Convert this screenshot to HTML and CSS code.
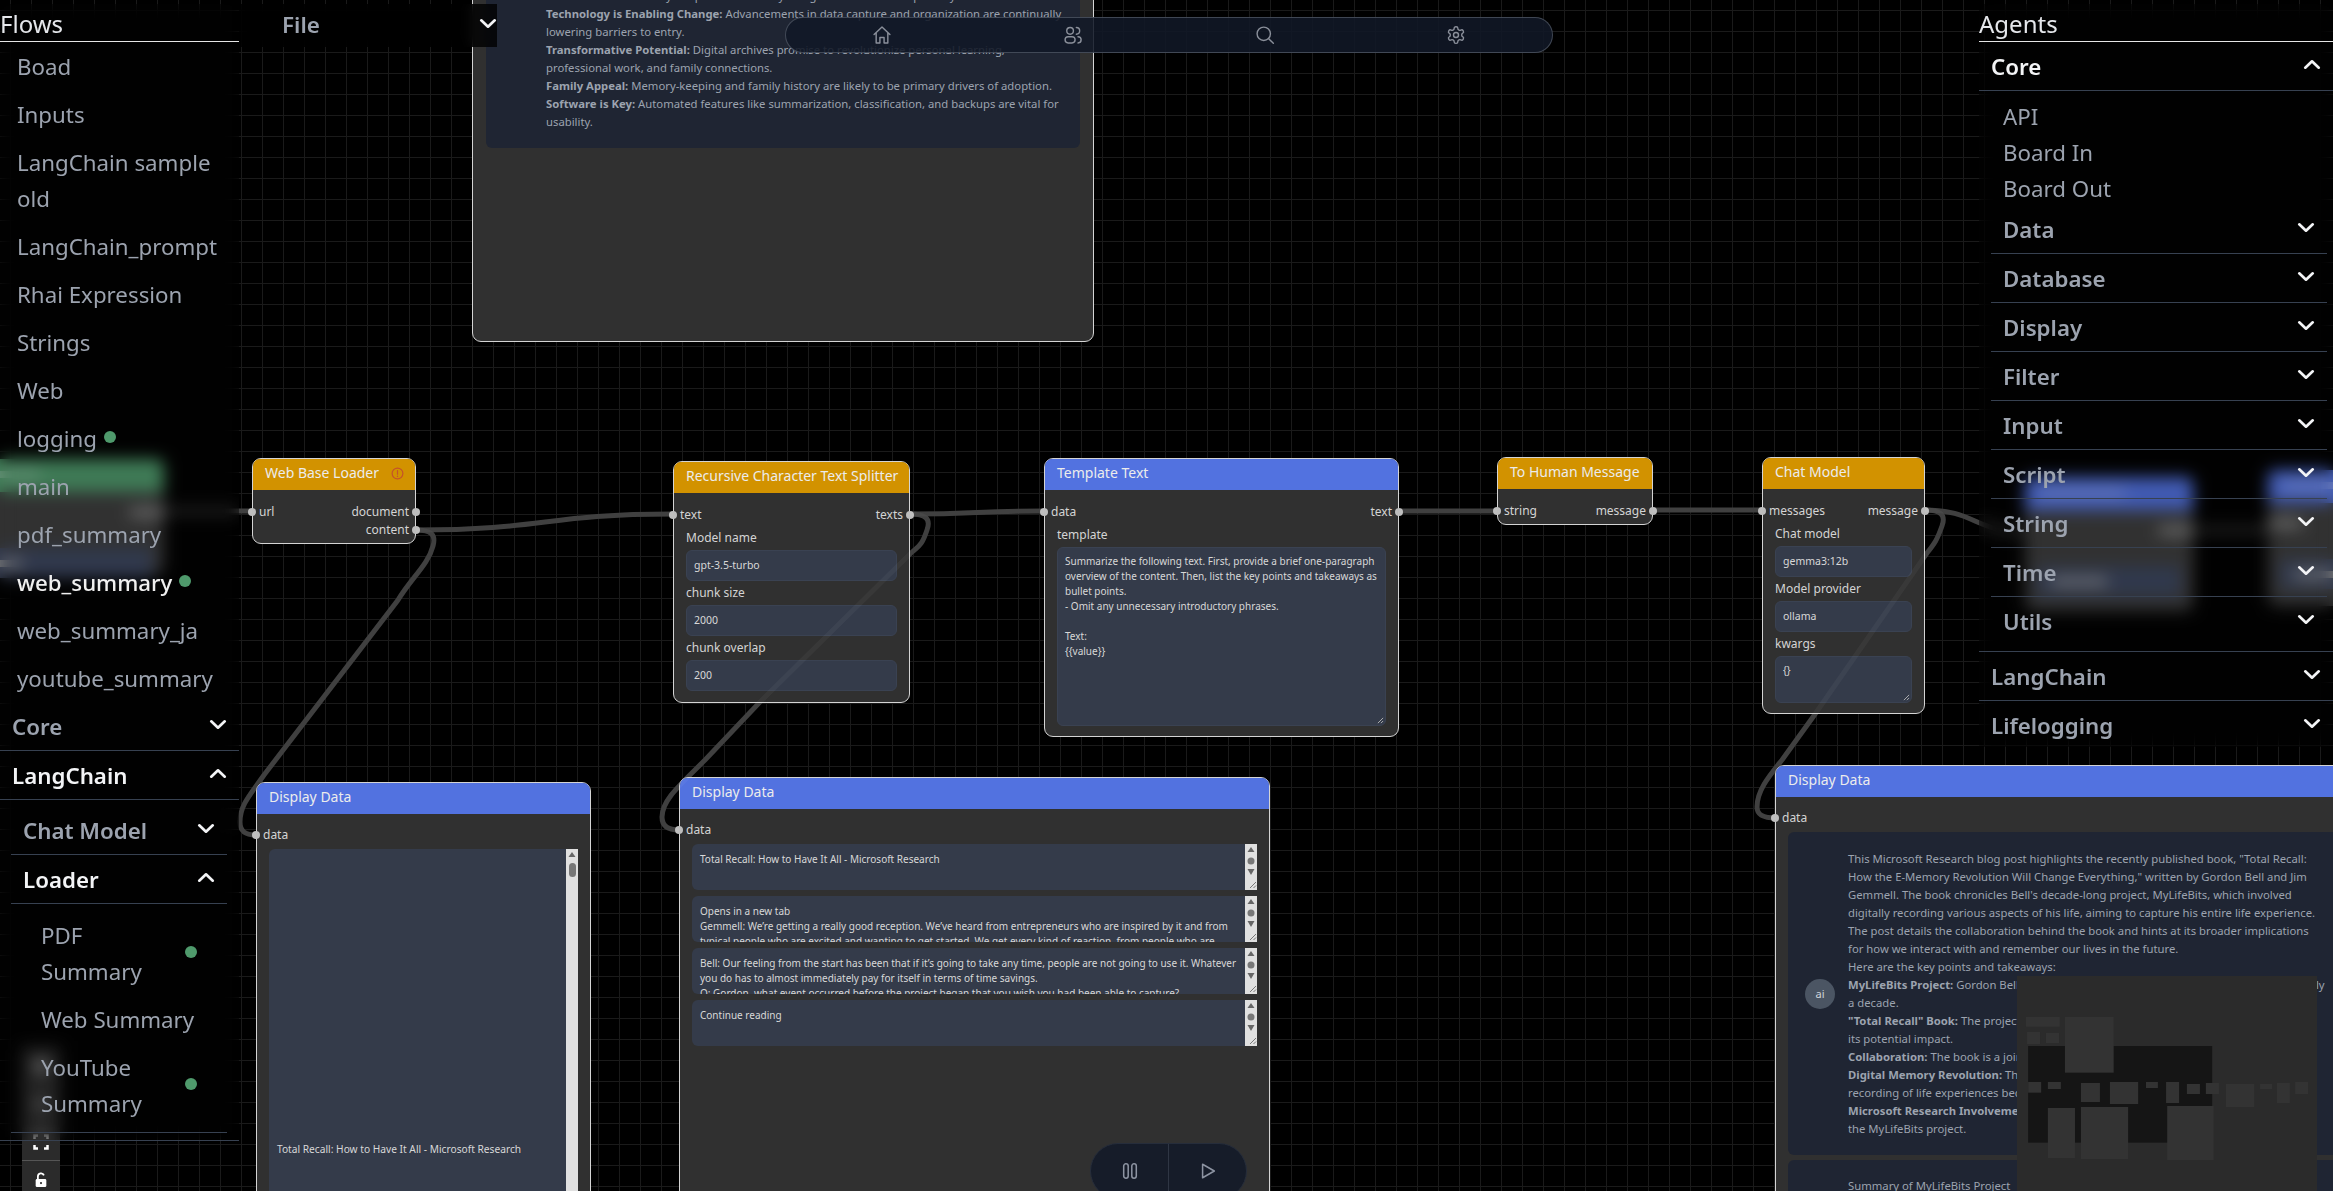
FILE: index.html
```html
<!DOCTYPE html>
<html lang="en">
<head>
  <meta charset="UTF-8" />
  <title>Flows</title>
  <link rel="stylesheet" href="styles.css">
</head>
<body>
  <svg class="defs" width="0" height="0">
    <symbol id="chev" viewBox="0 0 20 12">
      <path d="M2.500 2.500 10 9.500 17.500 2.500" fill="none" stroke="currentColor" stroke-width="3" stroke-linecap="round" stroke-linejoin="round"/>
    </symbol>
    <symbol id="sbar" viewBox="0 0 12 46">
      <path d="M6 3 9.500 8h-7z" fill="#666"/>
      <circle cx="6" cy="17" r="3.500" fill="#777"/>
      <path d="M6 31 9.500 25h-7z" fill="#666"/>
      <path d="M5 44 11 38M8.500 44 11 41.500" stroke="#777" stroke-width="1"/>
    </symbol>
    <g id="edges">
      <path d="M160 511H252"/>
      <path d="M416 530C545 530 545 514 673 514"/>
      <path d="M416 530C432 530 436 535 433 546C428 565 412 577 398 600L264 775C250 795 240 805 240 822C240 832 246 835 256 835"/>
      <path d="M910 514C977 514 977 511 1044 511"/>
      <path d="M910 514C926 514 931 519 927 530C922 545 920 545 911 553L759 703L705 760C680 785 662 800 662 817C662 826 668 830 679 830"/>
      <path d="M1399 511H1497"/>
      <path d="M1653 510H1762"/>
      <path d="M1925 510C1975 510 1975 532 2025 532"/>
      <path d="M1925 510C1941 510 1946 515 1942 526C1937 540 1935 543 1927 553L1813 717L1782 760C1770 775 1757 790 1757 807C1757 815 1763 818 1776 818"/>
      <path d="M2193 530H2268"/>
    </g>
  </svg>

  <main class="canvas">
    <svg class="edge-layer" viewBox="0 0 2333 1191"><use href="#edges"/></svg>

    <!-- nodes that sit behind the side panels -->
    <div class="node ghost n-ghost-a">
      <div class="node-head head-green"><span class="ghost-bit title"></span></div>
      <span class="ghost-bit port-bit"></span>
      <div class="ghost-field"><span class="ghost-bit value"></span></div>
    </div>
    <div class="node ghost n-ghost-b">
      <div class="node-head head-blue"><span class="ghost-bit title"></span></div>
      <span class="ghost-bit port-bit"></span>
      <div class="ghost-field"><span class="ghost-bit value"></span></div>
    </div>
    <div class="node ghost n-ghost-c">
      <div class="node-head head-blue"><span class="ghost-bit title"></span></div>
      <span class="ghost-bit port-bit left"></span>
      <div class="ghost-field"><span class="ghost-bit value"></span></div>
    </div>

    <div class="node n-summary">
      <div class="msg-card top-card">
        Personal Archives: Early adopters are already using these tools to keep family memories and records.<br>
        <b>Technology is Enabling Change:</b> Advancements in data capture and organization are continually<br>
        lowering barriers to entry.<br>
        <b>Transformative Potential:</b> Digital archives promise to revolutionize personal learning,<br>
        professional work, and family connections.<br>
        <b>Family Appeal:</b> Memory-keeping and family history are likely to be primary drivers of adoption.<br>
        <b>Software is Key:</b> Automated features like summarization, classification, and backups are vital for<br>
        usability.
      </div>
    </div>

    <div class="node n-loader">
      <div class="node-head head-orange">Web Base Loader
        <svg class="warn" viewBox="0 0 14 14"><circle cx="7" cy="7" r="5.800"/><path d="M7 3.800V7.800M7 9.800V10.200"/></svg>
      </div>
      <div class="port-row first"><span class="port in">url</span><span class="port out">document</span></div>
      <div class="port-row"><span></span><span class="port out">content</span></div>
    </div>

    <div class="node n-splitter">
      <div class="node-head head-orange">Recursive Character Text Splitter</div>
      <div class="port-row first"><span class="port in">text</span><span class="port out">texts</span></div>
      <div class="fields">
        <label>Model name</label>
        <div class="input">gpt-3.5-turbo</div>
        <label>chunk size</label>
        <div class="input">2000</div>
        <label>chunk overlap</label>
        <div class="input">200</div>
      </div>
    </div>

    <div class="node n-template">
      <div class="node-head head-blue">Template Text</div>
      <div class="port-row first"><span class="port in">data</span><span class="port out">text</span></div>
      <div class="fields">
        <label>template</label>
        <div class="input area tall">Summarize the following text. First, provide a brief one-paragraph<br>overview of the content. Then, list the key points and takeaways as<br>bullet points.<br>- Omit any unnecessary introductory phrases.<br><br>Text:<br>{{value}}<svg class="grip" viewBox="0 0 8 8"><path d="M1 7 7 1M4.500 7 7 4.500"/></svg></div>
      </div>
    </div>

    <div class="node n-human">
      <div class="node-head head-orange">To Human Message</div>
      <div class="port-row first"><span class="port in">string</span><span class="port out">message</span></div>
    </div>

    <div class="node n-chat">
      <div class="node-head head-orange">Chat Model</div>
      <div class="port-row first"><span class="port in">messages</span><span class="port out">message</span></div>
      <div class="fields">
        <label>Chat model</label>
        <div class="input">gemma3:12b</div>
        <label>Model provider</label>
        <div class="input">ollama</div>
        <label>kwargs</label>
        <div class="input area kwargs">{}<svg class="grip" viewBox="0 0 8 8"><path d="M1 7 7 1M4.500 7 7 4.500"/></svg></div>
      </div>
    </div>

    <div class="node display n-display-a">
      <div class="node-head head-blue">Display Data</div>
      <div class="port-row first"><span class="port in">data</span></div>
      <div class="long-area">
        <div class="long-text">Total Recall: How to Have It All - Microsoft Research</div>
        <div class="long-bar">
          <svg viewBox="0 0 12 12"><path d="M6 3 9.500 8h-7z" fill="#666"/></svg>
          <span class="long-thumb"></span>
        </div>
      </div>
    </div>

    <div class="node display n-display-b">
      <div class="node-head head-blue">Display Data</div>
      <div class="port-row first"><span class="port in">data</span></div>
      <div class="stack">
        <div class="stack-area"><div class="stack-text">Total Recall: How to Have It All - Microsoft Research</div><svg class="sbar"><use href="#sbar"/></svg></div>
        <div class="stack-area"><div class="stack-text">Opens in a new tab<br>Gemmell: We’re getting a really good reception. We’ve heard from entrepreneurs who are inspired by it and from<br>typical people who are excited and wanting to get started. We get every kind of reaction, from people who are</div><svg class="sbar"><use href="#sbar"/></svg></div>
        <div class="stack-area"><div class="stack-text">Bell: Our feeling from the start has been that if it’s going to take any time, people are not going to use it. Whatever<br>you do has to almost immediately pay for itself in terms of time savings.<br>Q: Gordon, what event occurred before the project began that you wish you had been able to capture?</div><svg class="sbar"><use href="#sbar"/></svg></div>
        <div class="stack-area"><div class="stack-text">Continue reading</div><svg class="sbar"><use href="#sbar"/></svg></div>
      </div>
      <div class="run-pill">
        <button class="run-btn">
          <svg viewBox="0 0 20 20"><rect x="3" y="2" width="5" height="16" rx="2.500"/><rect x="12" y="2" width="5" height="16" rx="2.500"/></svg>
        </button>
        <button class="run-btn">
          <svg viewBox="0 0 20 20"><path d="M4 2.500 17 10 4 17.500z"/></svg>
        </button>
      </div>
    </div>

    <div class="node display n-display-c">
      <div class="node-head head-blue">Display Data</div>
      <div class="port-row first"><span class="port in">data</span></div>
      <div class="msg-card chat-card">
        <span class="avatar">ai</span>
        <div class="msg-text">
          This Microsoft Research blog post highlights the recently published book, "Total Recall:<br>
          How the E-Memory Revolution Will Change Everything," written by Gordon Bell and Jim<br>
          Gemmell. The book chronicles Bell's decade-long project, MyLifeBits, which involved<br>
          digitally recording various aspects of his life, aiming to capture his entire life experience.<br>
          The post details the collaboration behind the book and hints at its broader implications<br>
          for how we interact with and remember our lives in the future.<br>
          Here are the key points and takeaways:<br>
          <b>MyLifeBits Project:</b> Gordon Bell digitally recorded nearly every aspect of his life for nearly<br>
          a decade.<br>
          <b>"Total Recall" Book:</b> The project led to a book exploring e-memory and<br>
          its potential impact.<br>
          <b>Collaboration:</b> The book is a joint effort by Bell and Gemmell.<br>
          <b>Digital Memory Revolution:</b> The book argues that the<br>
          recording of life experiences because of technology.<br>
          <b>Microsoft Research Involvement:</b> The lab supported<br>
          the MyLifeBits project.
        </div>
      </div>
      <div class="msg-card chat-card next">
        <div class="msg-text">Summary of MyLifeBits Project</div>
      </div>
    </div>

    <svg class="edge-layer faint" viewBox="0 0 2333 1191"><use href="#edges"/></svg>

    <div class="view-controls">
      <button class="ctl">
        <svg viewBox="0 0 16 16"><path d="M8 1V15M1 8H15"/></svg>
      </button>
      <button class="ctl">
        <svg viewBox="0 0 16 16"><path d="M1 8H15"/></svg>
      </button>
      <button class="ctl">
        <svg viewBox="0 0 16 16"><path d="M1.500 5V1.500H5M11 1.500h3.500V5M14.500 11v3.500H11M5 14.500H1.500V11"/></svg>
      </button>
      <button class="ctl">
        <svg class="lock" viewBox="0 0 16 18"><path d="M4.500 8V5a3.500 3.500 0 0 1 6.800-1.200"/><rect x="2" y="8" width="12" height="9" rx="1.500"/><circle cx="8" cy="12.500" r="1.200"/></svg>
      </button>
    </div>

    <svg class="minimap" viewBox="718 678 807 645" preserveAspectRatio="none">
      <rect x="718" y="678" width="807" height="645" fill="#2b2b2b"/>
      <rect x="748" y="888" width="495" height="290" fill="#151515"/>
      <g fill="#333">
        <rect x="742" y="801" width="91" height="29"/>
        <rect x="847" y="801" width="131" height="167"/>
        <rect x="745" y="846" width="35" height="36"/>
        <rect x="796" y="849" width="35" height="30"/>
        <rect x="748" y="996" width="35" height="32"/>
        <rect x="801" y="996" width="35" height="21"/>
        <rect x="890" y="999" width="51" height="57"/>
        <rect x="968" y="996" width="76" height="66"/>
        <rect x="1065" y="996" width="32" height="18"/>
        <rect x="1119" y="996" width="35" height="63"/>
        <rect x="1175" y="1002" width="35" height="30"/>
        <rect x="1226" y="999" width="35" height="33"/>
        <rect x="1280" y="1002" width="76" height="69"/>
        <rect x="1372" y="1002" width="32" height="15"/>
        <rect x="1417" y="999" width="35" height="60"/>
        <rect x="1466" y="996" width="35" height="36"/>
        <rect x="801" y="1074" width="73" height="150"/>
        <rect x="890" y="1071" width="127" height="156"/>
        <rect x="1122" y="1068" width="125" height="162"/>
      </g>
    </svg>

    <header class="file-bar">
      <span>File</span>
      <svg class="chev"><use href="#chev"/></svg>
    </header>

    <aside class="panel panel-left">
      <h2 class="panel-title">Flows</h2>
      <ul class="flow-list">
        <li>Boad</li>
        <li>Inputs</li>
        <li>LangChain sample<br>old</li>
        <li>LangChain_prompt</li>
        <li>Rhai Expression</li>
        <li>Strings</li>
        <li>Web</li>
        <li>logging<span class="live"></span></li>
        <li>main</li>
        <li>pdf_summary</li>
        <li class="current">web_summary<span class="live"></span></li>
        <li>web_summary_ja</li>
        <li>youtube_summary</li>
      </ul>
      <div class="acc-head">Core<svg class="chev"><use href="#chev"/></svg></div>
      <div class="acc-head open">LangChain<svg class="chev up"><use href="#chev"/></svg></div>
      <div class="acc-panel">
        <div class="acc-head">Chat Model<svg class="chev"><use href="#chev"/></svg></div>
        <div class="acc-head open">Loader<svg class="chev up"><use href="#chev"/></svg></div>
        <ul class="sub-list">
          <li><span>PDF<br>Summary</span><span class="live"></span></li>
          <li><span>Web Summary</span></li>
          <li><span>YouTube<br>Summary</span><span class="live"></span></li>
        </ul>
      </div>
    </aside>

    <aside class="panel panel-right">
      <h2 class="panel-title">Agents</h2>
      <div class="acc-head open">Core<svg class="chev up"><use href="#chev"/></svg></div>
      <div class="acc-panel">
        <ul class="agent-list">
          <li>API</li>
          <li>Board In</li>
          <li>Board Out</li>
        </ul>
        <div class="acc-head">Data<svg class="chev"><use href="#chev"/></svg></div>
        <div class="acc-head">Database<svg class="chev"><use href="#chev"/></svg></div>
        <div class="acc-head">Display<svg class="chev"><use href="#chev"/></svg></div>
        <div class="acc-head">Filter<svg class="chev"><use href="#chev"/></svg></div>
        <div class="acc-head">Input<svg class="chev"><use href="#chev"/></svg></div>
        <div class="acc-head">Script<svg class="chev"><use href="#chev"/></svg></div>
        <div class="acc-head">String<svg class="chev"><use href="#chev"/></svg></div>
        <div class="acc-head">Time<svg class="chev"><use href="#chev"/></svg></div>
        <div class="acc-head last">Utils<svg class="chev"><use href="#chev"/></svg></div>
      </div>
      <div class="acc-head">LangChain<svg class="chev"><use href="#chev"/></svg></div>
      <div class="acc-head last">Lifelogging<svg class="chev"><use href="#chev"/></svg></div>
    </aside>

    <nav class="top-nav">
      <a class="nav-item"><svg viewBox="0 0 24 24"><path d="M2.500 11.500 12 2.500l9.500 9M5 9.500V21.500H9.500V15H14.500V21.500H19V9.500"/></svg></a>
      <a class="nav-item"><svg viewBox="0 0 24 24"><circle cx="8.500" cy="7" r="4"/><path d="M16 3a4 4 0 0 1 0 8"/><rect x="2.500" y="14" width="12" height="7.500" rx="3.700"/><path d="M18 14a3.700 3.700 0 0 1 0 7.500"/></svg></a>
      <a class="nav-item"><svg viewBox="0 0 24 24"><circle cx="10.500" cy="10.500" r="8"/><path d="M16.500 16.500 22 22"/></svg></a>
      <a class="nav-item"><svg viewBox="0 0 24 24"><path d="M12.220 2h-.44a2 2 0 0 0-2 2v.18a2 2 0 0 1-1 1.730l-.43.250a2 2 0 0 1-2 0l-.15-.08a2 2 0 0 0-2.730.730l-.22.380a2 2 0 0 0 .730 2.730l.15.1a2 2 0 0 1 1 1.720v.51a2 2 0 0 1-1 1.740l-.15.090a2 2 0 0 0-.730 2.730l.22.380a2 2 0 0 0 2.730.730l.15-.08a2 2 0 0 1 2 0l.43.250a2 2 0 0 1 1 1.730V20a2 2 0 0 0 2 2h.44a2 2 0 0 0 2-2v-.18a2 2 0 0 1 1-1.730l.43-.250a2 2 0 0 1 2 0l.15.08a2 2 0 0 0 2.730-.730l.22-.39a2 2 0 0 0-.730-2.730l-.15-.08a2 2 0 0 1-1-1.740v-.5a2 2 0 0 1 1-1.740l.15-.090a2 2 0 0 0 .730-2.730l-.22-.380a2 2 0 0 0-2.730-.730l-.15.08a2 2 0 0 1-2 0l-.43-.250a2 2 0 0 1-1-1.730V4a2 2 0 0 0-2-2z"/><circle cx="12" cy="12" r="3"/></svg></a>
    </nav>
  </main>
</body>
</html>
```

FILE: styles.css
```css
* {
  box-sizing: border-box;
}

body {
  margin: 0;
  background: #000;
  font-family: "Noto Sans", "Open Sans", sans-serif;
  overflow: hidden;
}

.defs {
  position: absolute;
}

.canvas {
  position: relative;
  width: 2333px;
  height: 1191px;
  overflow: hidden;
  background-color: #000;
  background-image:
    linear-gradient(#1a1a1a 1.5px, transparent 1.5px),
    linear-gradient(90deg, #1a1a1a 1.5px, transparent 1.5px);
  background-size: 21px 21px;
  background-position: 10px 10px;
}

/* edges */
.edge-layer {
  position: absolute;
  left: 0;
  top: 0;
  width: 2333px;
  height: 1191px;
  fill: none;
  stroke: #383838;
  stroke-width: 5px;
  pointer-events: none;
}

.edge-layer.faint {
  stroke: rgba(255, 255, 255, 0.045);
}

/* nodes */
.node {
  position: absolute;
  background: #303030;
  border: 1.5px solid #d4d4d4;
  border-radius: 9px;
  color: #d4d4d4;
}

.node-head {
  height: 31px;
  padding: 0 12px;
  border-radius: 7px 7px 0 0;
  font-size: 14px;
  line-height: 28px;
  color: #ececec;
  white-space: nowrap;
}

.head-orange { background: #d29200; }
.head-blue { background: #5272e0; }
.head-green { background: #4f9a6c; }

.warn {
  width: 13px;
  height: 13px;
  margin-left: 8px;
  vertical-align: -2px;
  fill: none;
  stroke: #c4532a;
  stroke-width: 1.3;
  stroke-linecap: round;
}

.port-row {
  display: flex;
  justify-content: space-between;
  height: 18px;
  padding: 0 6px;
  font-size: 12px;
  line-height: 18px;
}

.port-row.first {
  margin-top: 13px;
}

.display .port-row.first {
  margin-top: 12px;
}

.port {
  position: relative;
}

.port::before {
  content: "";
  position: absolute;
  top: 5px;
  width: 8px;
  height: 8px;
  border-radius: 50%;
  background: #bdbdbd;
}

.port.in::before { left: -11px; }
.port.out::before { right: -11px; }

.fields {
  display: flex;
  flex-direction: column;
  padding: 6px 12px 0;
}

.fields label {
  height: 18px;
  margin-bottom: 2px;
  font-size: 12px;
  line-height: 16px;
}

.input {
  position: relative;
  height: 31px;
  margin-bottom: 4px;
  padding: 0 7px;
  background: #343b4a;
  border: 1px solid #3a4252;
  border-radius: 6px;
  font-size: 10.5px;
  line-height: 29px;
  color: #d8d8d8;
  white-space: nowrap;
}

.input.area {
  padding-top: 6px;
  font-size: 10px;
  line-height: 15px;
}

.input.tall { height: 179px; }
.input.kwargs { height: 47px; }

.grip {
  position: absolute;
  right: 1px;
  bottom: 1px;
  width: 7px;
  height: 7px;
  fill: none;
  stroke: #bbb;
  stroke-width: 1;
}

.n-summary { left: 472px; top: -60px; width: 622px; height: 402px; }
.n-loader { left: 252px; top: 458px; width: 164px; height: 86px; }
.n-splitter { left: 673px; top: 461px; width: 237px; height: 242px; }
.n-template { left: 1044px; top: 458px; width: 355px; height: 279px; }
.n-human { left: 1497px; top: 457px; width: 156px; height: 68px; }
.n-chat { left: 1762px; top: 457px; width: 163px; height: 257px; }
.n-display-a { left: 256px; top: 782px; width: 335px; height: 600px; }
.n-display-b { left: 679px; top: 777px; width: 591px; height: 600px; }
.n-display-c { left: 1775px; top: 765px; width: 620px; height: 600px; }

.ghost {
  border: 0;
  background: #3e3e3e;
}

.ghost .node-head { height: 33px; }
.n-ghost-a { left: -60px; top: 459px; width: 224px; height: 116px; }
.n-ghost-b { left: 2025px; top: 477px; width: 168px; height: 134px; }
.n-ghost-c { left: 2268px; top: 470px; width: 140px; height: 136px; }

.ghost-field {
  position: relative;
  height: 30px;
  margin: 56px 12px 0;
  background: #3d4760;
}

.ghost-bit {
  display: block;
  position: absolute;
  height: 7px;
  background: #9a9a9a;
}

.ghost-bit.title {
  left: 14px;
  top: 12px;
  width: 86px;
  background: rgba(255, 255, 255, 0.3);
}

.ghost-bit.port-bit {
  right: 0;
  top: 50px;
  width: 34px;
}

.ghost-bit.port-bit.left {
  left: 0;
  right: auto;
}

.ghost-bit.value {
  left: 14px;
  top: 12px;
  width: 56px;
}

/* long text areas */
.long-area {
  display: flex;
  height: 560px;
  margin: 5px 12px 0;
  background: #343b4a;
  border-radius: 6px 0 0 6px;
}

.long-text {
  flex: 1;
  padding: 293px 8px 0;
  font-size: 10.2px;
  line-height: 15px;
  color: #d8d8d8;
}

.long-bar {
  display: flex;
  flex-direction: column;
  align-items: center;
  width: 12px;
  background: #e0e0e0;
}

.long-bar svg {
  width: 12px;
  height: 12px;
  flex: none;
}

.long-thumb {
  width: 7px;
  height: 14px;
  margin-top: 2px;
  background: #777;
  border-radius: 4px;
}

.stack {
  display: flex;
  flex-direction: column;
  gap: 6px;
  margin: 5px 12px 0;
}

.stack-area {
  display: flex;
  height: 46px;
  overflow: hidden;
  background: #343b4a;
  border-radius: 6px 0 0 6px;
}

.stack-text {
  flex: 1;
  padding: 8px 8px 0;
  font-size: 10px;
  line-height: 15px;
  color: #d8d8d8;
  white-space: nowrap;
}

.sbar {
  flex: none;
  width: 12px;
  height: 46px;
  background: #e0e0e0;
}

.run-pill {
  position: absolute;
  left: 410px;
  top: 365px;
  display: flex;
  width: 157px;
  height: 56px;
  background: #161c29;
  border: 1px solid #262d3b;
  border-radius: 28px;
}

.run-btn {
  display: flex;
  flex: 1;
  align-items: center;
  justify-content: center;
  padding: 0;
  background: none;
  border: 0;
}

.run-btn + .run-btn {
  border-left: 1px solid #2f3644;
}

.run-btn svg {
  width: 18px;
  height: 18px;
  fill: none;
  stroke: #8d94a2;
  stroke-width: 1.7;
  stroke-linejoin: round;
}

/* chat message cards */
.msg-card {
  background: #1f2533;
  border-radius: 6px;
  font-size: 11.3px;
  line-height: 18px;
  color: #9ca3af;
  white-space: nowrap;
}

.top-card {
  margin: 0 13px;
  height: 207px;
  padding: 46px 0 0 60px;
  overflow: hidden;
}

.chat-card {
  display: flex;
  align-items: center;
  gap: 13px;
  height: 323px;
  margin: 5px 12px 0;
  padding: 0 17px;
}

.chat-card.next {
  height: 60px;
  margin-top: 5px;
  align-items: flex-start;
  padding: 17px 0 0 60px;
}

.avatar {
  flex: none;
  width: 30px;
  height: 30px;
  border-radius: 50%;
  background: #4b5563;
  color: #d1d5db;
  font-size: 11px;
  line-height: 30px;
  text-align: center;
}

/* overlays */
.view-controls {
  position: absolute;
  left: 22px;
  top: 1047px;
  width: 38px;
}

.ctl {
  display: flex;
  align-items: center;
  justify-content: center;
  width: 38px;
  height: 38px;
  padding: 0;
  background: #2b2b2b;
  border: 0;
  border-bottom: 1px solid #555;
}

.ctl svg {
  width: 16px;
  height: 16px;
  fill: none;
  stroke: #fff;
  stroke-width: 2.5;
}

.ctl .lock {
  stroke-width: 2;
}

.ctl .lock rect {
  fill: #fff;
  stroke: none;
}

.ctl .lock circle {
  fill: #2b2b2b;
  stroke: none;
}

.minimap {
  position: absolute;
  left: 2017px;
  top: 976px;
  width: 300px;
  height: 215px;
}

.file-bar {
  position: absolute;
  left: 239px;
  top: 4px;
  display: flex;
  align-items: center;
  justify-content: space-between;
  width: 258px;
  height: 43px;
  padding: 0 0 0 43px;
  background: rgba(0, 0, 0, 0.8);
  backdrop-filter: blur(6px);
  font-size: 22.4px;
  font-weight: 600;
  color: #9ca3af;
}

.file-bar span {
  margin-top: -3px;
}

.panel {
  position: absolute;
  top: 4px;
  background: rgba(0, 0, 0, 0.2);
  backdrop-filter: blur(8px);
  color: #9ca3af;
  font-size: 22.3px;
}

.panel-left {
  left: 0;
  width: 239px;
  height: 1136px;
}

.panel-right {
  left: 1979px;
  width: 354px;
  height: 743px;
}

.panel-title {
  height: 38px;
  margin: 0;
  padding-top: 2px;
  border-bottom: 1px solid #e5e5e5;
  font-size: 24px;
  font-weight: 400;
  line-height: 36px;
  color: #e5e7eb;
}

.flow-list,
.sub-list,
.agent-list {
  margin: 0;
  padding: 0;
  list-style: none;
}

.flow-list li {
  padding: 7px 17px 5px;
  line-height: 36px;
  white-space: nowrap;
}

.flow-list li.current {
  color: #f0f0f0;
  font-weight: 500;
}

.live {
  display: inline-block;
  width: 12px;
  height: 12px;
  margin-left: 7px;
  border-radius: 50%;
  background: #4f9a6c;
  vertical-align: 4px;
}

.acc-head {
  display: flex;
  align-items: center;
  justify-content: space-between;
  height: 49px;
  padding: 0 12px;
  border-bottom: 1px solid #374151;
  font-weight: 600;
}

.acc-head.open {
  color: #f3f4f6;
}

.acc-head.last {
  border-bottom: 0;
}

.chev {
  flex: none;
  width: 18px;
  height: 11px;
  margin-top: -4px;
  color: #f3f4f6;
}

.chev.up {
  transform: rotate(180deg);
}

.acc-panel {
  padding: 6px 12px 7px 11px;
  border-bottom: 1px solid #374151;
}

.sub-list {
  padding: 8px 0 4px;
  border-bottom: 1px solid #374151;
}

.sub-list li {
  display: flex;
  align-items: center;
  justify-content: space-between;
  padding: 6px 30px;
  line-height: 36px;
  white-space: nowrap;
}

.sub-list .live {
  margin: 0 0 5px;
}

.panel-right .acc-panel {
  padding: 8px 6px 5px 12px;
}

.agent-list {
  margin-bottom: -2px;
}

.agent-list li {
  padding-left: 12px;
  line-height: 36px;
}

.top-nav {
  position: absolute;
  left: 785px;
  top: 17px;
  display: grid;
  grid-template-columns: repeat(4, 1fr);
  width: 768px;
  height: 36px;
  background: rgba(17, 24, 39, 0.88);
  border: 1px solid rgba(156, 163, 175, 0.35);
  border-radius: 18px;
}

.nav-item {
  display: flex;
  align-items: center;
  justify-content: center;
}

.nav-item svg {
  width: 20px;
  height: 20px;
  fill: none;
  stroke: #8a8f9a;
  stroke-width: 1.7;
  stroke-linecap: round;
  stroke-linejoin: round;
}
```
